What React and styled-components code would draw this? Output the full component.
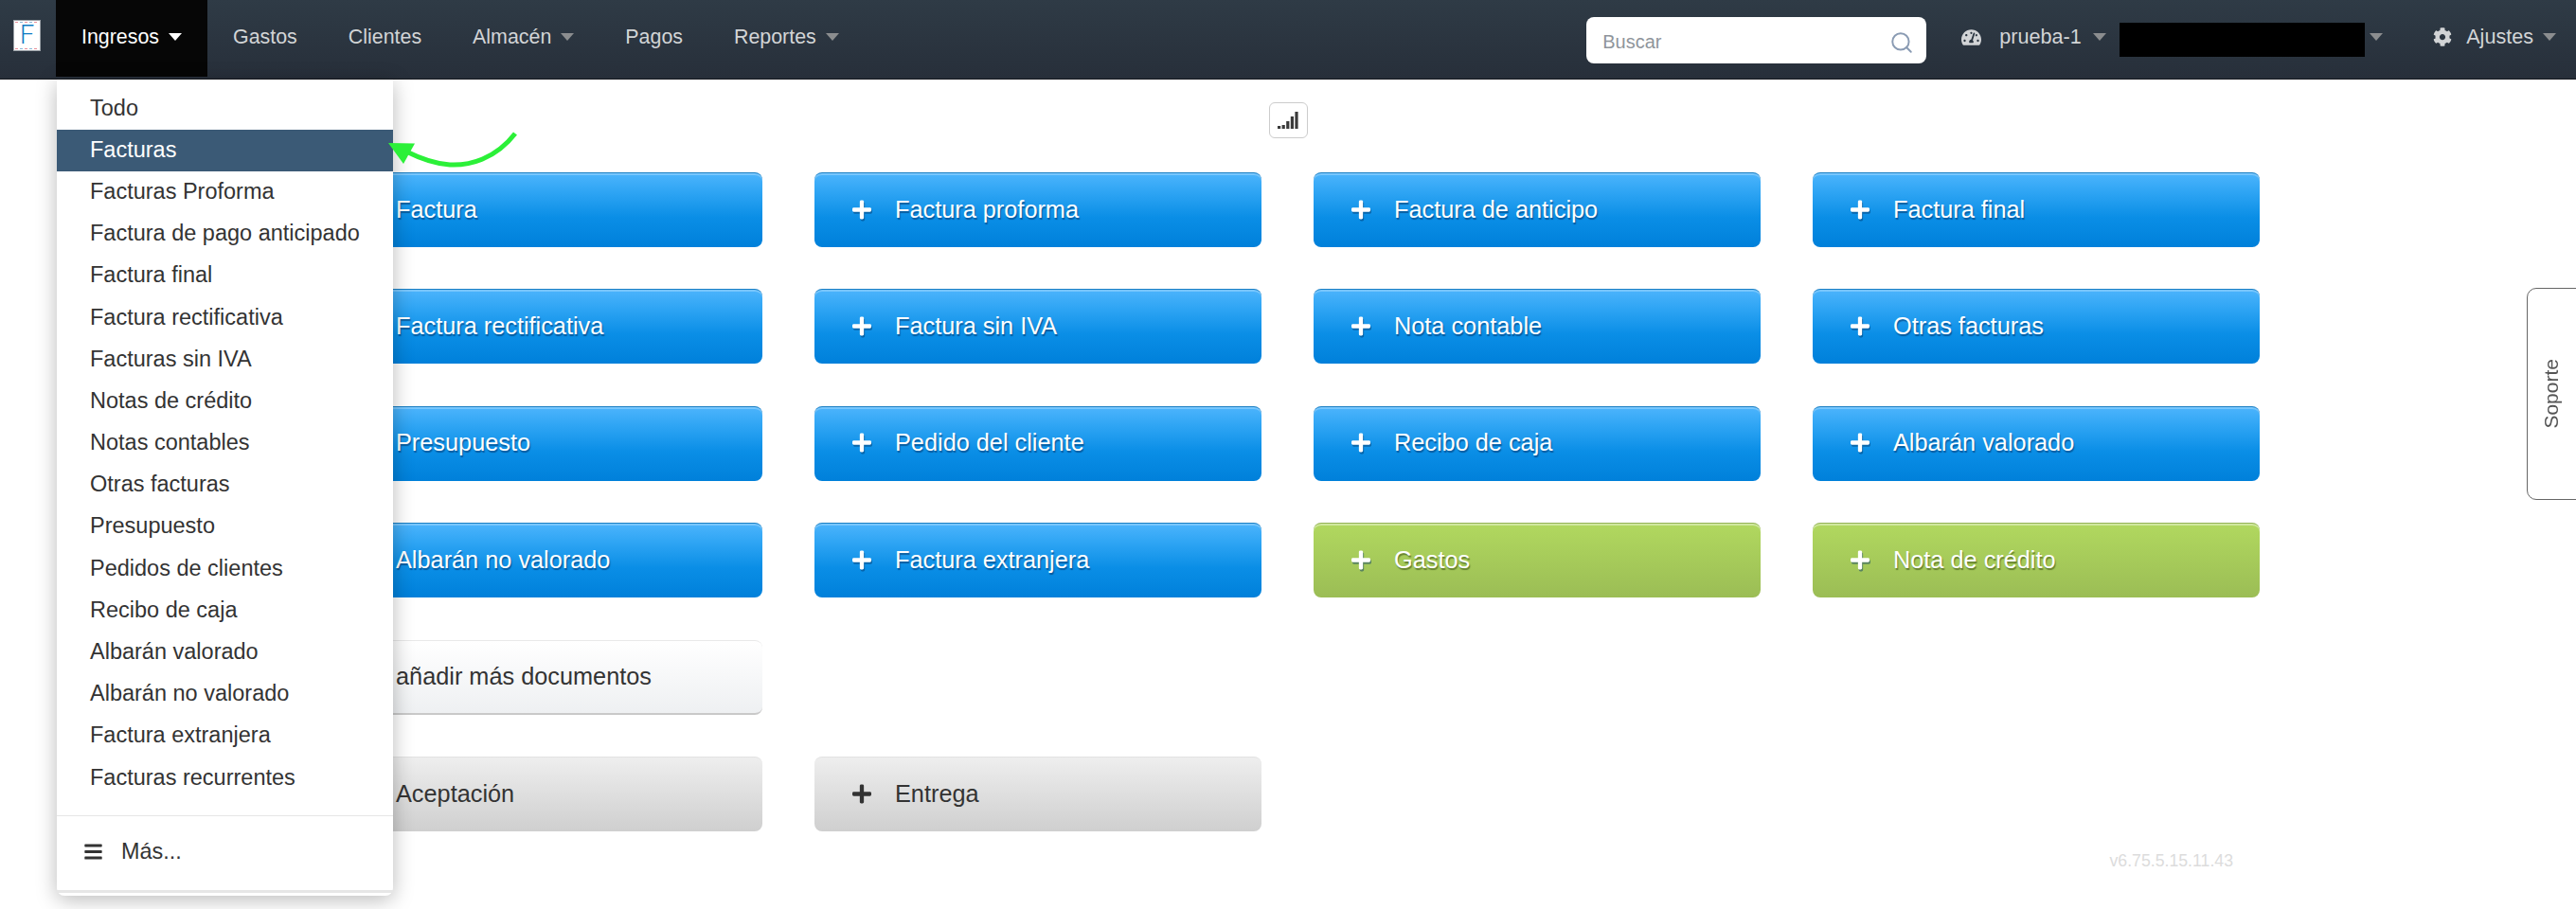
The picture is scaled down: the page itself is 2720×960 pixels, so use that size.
import React from "react";
import styled, { createGlobalStyle, css } from "styled-components";
import { FaPlus, FaBars, FaCog, FaTachometerAlt } from "react-icons/fa";
import { Search } from "lucide-react";

const GlobalStyle = createGlobalStyle`
  html, body {
    margin: 0;
    background: #fff;
    font-family: "Liberation Sans", Arial, sans-serif;
  }
  body {
    height: 960px;
    overflow: hidden;
  }
`;

const Page = styled.div`
  position: relative;
  width: 2720px;
  height: 960px;
  overflow: hidden;
`;

const NavBar = styled.header`
  display: flex;
  align-items: flex-start;
  height: 83px;
  background: linear-gradient(#2f3b46, #272f3a);
  border-bottom: 1px solid #14181d;
`;

const Logo = styled.div`
  display: flex;
  align-items: center;
  justify-content: center;
  box-sizing: border-box;
  width: 29px;
  height: 33px;
  margin: 21px 16px 0 14px;
  background:
    repeating-linear-gradient(90deg, #e8909a 0 3px, #fff 3px 5px, #8ab8d8 5px 8px, #fff 8px 10px) top 1px left 1px / 25px 1px no-repeat,
    repeating-linear-gradient(90deg, #e8909a 0 3px, #fff 3px 5px, #8ab8d8 5px 8px, #fff 8px 10px) bottom 1px left 1px / 25px 1px no-repeat,
    #fff;
  border: 1px solid #9aa0a6;
  color: #0f7cc4;
  font-family: Roboto, "Liberation Sans", sans-serif;
  font-weight: 300;
  font-size: 27px;
  line-height: 1;
`;

const NavItem = styled.div`
  display: flex;
  align-items: center;
  gap: 10px;
  height: 78px;
  padding: 0 27px 3px;
  font-size: 21.4px;
  color: #d2d4d6;
  ${(p) =>
    p.$active &&
    css`
      background: #060606;
      color: #fff;
    `}
`;

const Caret = styled.span`
  width: 0;
  height: 0;
  border-left: 7px solid transparent;
  border-right: 7px solid transparent;
  border-top: 8px solid ${(p) => (p.$light ? "#fff" : "#8b8d8f")};
`;

const SearchBox = styled.div`
  display: flex;
  align-items: center;
  justify-content: space-between;
  box-sizing: border-box;
  width: 359px;
  height: 49px;
  margin: 18px 0 0 auto;
  padding: 4px 13px 0 17px;
  background: #fff;
  border-radius: 8px;
  font-size: 20px;
  color: #8f959b;
`;

const RightGroup = styled.div`
  display: flex;
  align-items: center;
  height: 78px;
  margin-left: 37px;
  padding-right: 21px;
  font-size: 21.6px;
  color: #d2d4d6;
`;

const RightIcon = styled.span`
  display: flex;
  margin-right: ${(p) => p.$gap}px;
`;

const RightLabel = styled.span`
  margin-right: ${(p) => p.$gap}px;
`;

const Redacted = styled.div`
  width: 259px;
  height: 36px;
  margin: 6px 5px 0 14.5px;
  background: #000;
`;

const SpacedCaret = styled(Caret)`
  margin-right: ${(p) => p.$after || 0}px;
`;

const Menu = styled.nav`
  position: absolute;
  z-index: 5;
  top: 84px;
  left: 60px;
  box-sizing: border-box;
  width: 355px;
  height: 862px;
  padding-top: 9px;
  background: #fff;
  border-radius: 0 0 8px 8px;
  box-shadow: 0 4px 22px rgba(0, 0, 0, 0.28);
`;

const MenuItem = styled.div`
  display: flex;
  align-items: center;
  box-sizing: border-box;
  height: 44.2px;
  padding: 0 0 2px 35px;
  font-size: 23.5px;
  color: #333;
  ${(p) =>
    p.$active &&
    css`
      background: #3b5a76;
      color: #fff;
    `}
`;

const MenuDivider = styled.div`
  height: ${(p) => p.$thick || 1}px;
  margin-top: ${(p) => p.$top}px;
  background: #e6e6e6;
`;

const MoreItem = styled.div`
  display: flex;
  align-items: center;
  gap: 19px;
  box-sizing: border-box;
  height: 78px;
  padding: 0 0 3px 28px;
  font-size: 23.4px;
  color: #333;
`;

const Arrow = styled.svg`
  position: absolute;
  z-index: 6;
  top: 130px;
  left: 401px;
`;

const Main = styled.main`
  display: flex;
  flex-direction: column;
  align-items: center;
  padding-top: 24px;
`;

const SignalButton = styled.div`
  display: flex;
  align-items: center;
  justify-content: center;
  box-sizing: border-box;
  width: 41px;
  height: 38px;
  margin-bottom: 36px;
  background: #fff;
  border: 1px solid #ccc;
  border-radius: 6px;
`;

const Board = styled.div`
  align-self: flex-start;
  width: 2053px;
  margin-left: 333px;
`;

const ButtonList = styled.div`
  display: flex;
  flex-direction: column;
  gap: 44.4px;
`;

const ButtonRow = styled.div`
  display: flex;
  gap: 55px;
`;

const variants = {
  blue: css`
    padding-bottom: 2px;
    background: linear-gradient(#4cb4fc 0%, #2fa5f4 25%, #0a8ee6 60%, #0080da 100%);
    border-top: 1px solid #1a7fc4;
    box-shadow: inset 0 2px 0 rgba(255, 255, 255, 0.25);
    color: #fff;
    text-shadow: 1px 2px 1px rgba(0, 50, 100, 0.55);
  `,
  green: css`
    padding-bottom: 2px;
    background: linear-gradient(#b1d85f, #9bbd55);
    border-top: 1px solid #93b356;
    box-shadow: inset 0 2px 0 rgba(255, 255, 255, 0.4);
    color: #fff;
    text-shadow: 1px 2px 1px rgba(60, 80, 20, 0.6);
  `,
  white: css`
    background: linear-gradient(#fff, #eef0f2);
    border-top: 1px solid #e9e9e9;
    border-bottom: 2px solid #c9c9c9;
    color: #333;
  `,
  gray: css`
    background: linear-gradient(#eeeeee, #cfcfcf);
    border-top: 1px solid #e2e2e2;
    color: #333;
  `,
};

const DocButton = styled.div`
  display: flex;
  align-items: center;
  gap: 25px;
  box-sizing: border-box;
  width: 472px;
  height: 79px;
  padding-left: 40px;
  border-radius: 8px;
  font-size: 25.3px;
  ${(p) => variants[p.$variant]}
  svg {
    flex: none;
    width: 20px;
    ${(p) =>
      (p.$variant === "blue" || p.$variant === "green") &&
      css`
        filter: drop-shadow(1px 2px 0 rgba(0, 50, 100, 0.45));
      `}
  }
`;

const Version = styled.div`
  margin-top: 21px;
  padding-right: 28px;
  text-align: right;
  font-size: 17.7px;
  color: #dcdcdc;
`;

const SupportTab = styled.div`
  position: absolute;
  top: 304px;
  left: 2668px;
  display: flex;
  align-items: center;
  justify-content: center;
  box-sizing: border-box;
  width: 70px;
  height: 224px;
  padding-right: 18px;
  background: #fff;
  border: 1px solid #666;
  border-radius: 10px;
  font-size: 21px;
  color: #555;
`;

const SupportLabel = styled.span`
  writing-mode: vertical-rl;
  transform: rotate(180deg);
`;

const menuItems = [
  "Todo",
  "Facturas",
  "Facturas Proforma",
  "Factura de pago anticipado",
  "Factura final",
  "Factura rectificativa",
  "Facturas sin IVA",
  "Notas de crédito",
  "Notas contables",
  "Otras facturas",
  "Presupuesto",
  "Pedidos de clientes",
  "Recibo de caja",
  "Albarán valorado",
  "Albarán no valorado",
  "Factura extranjera",
  "Facturas recurrentes",
];

const rows = [
  [["Factura"], ["Factura proforma"], ["Factura de anticipo"], ["Factura final"]],
  [["Factura rectificativa"], ["Factura sin IVA"], ["Nota contable"], ["Otras facturas"]],
  [["Presupuesto"], ["Pedido del cliente"], ["Recibo de caja"], ["Albarán valorado"]],
  [["Albarán no valorado"], ["Factura extranjera"], ["Gastos", "green"], ["Nota de crédito", "green"]],
  [["añadir más documentos", "white"]],
  [["Aceptación", "gray"], ["Entrega", "gray"]],
];

const signalBars = [3, 4, 8, 13, 18];

function SignalIcon() {
  return (
    <svg width="23" height="18" viewBox="0 0 23 18" fill="#3a3a3a">
      {signalBars.map((h, i) => (
        <rect key={i} x={i * 4.6} y={18 - h} width="3.2" height={h} />
      ))}
    </svg>
  );
}

export default function App() {
  return (
    <Page>
      <GlobalStyle />
      <NavBar>
        <Logo>F</Logo>
        <NavItem $active>
          Ingresos <Caret $light />
        </NavItem>
        <NavItem>Gastos</NavItem>
        <NavItem>Clientes</NavItem>
        <NavItem>
          Almacén <Caret />
        </NavItem>
        <NavItem>Pagos</NavItem>
        <NavItem>
          Reportes <Caret />
        </NavItem>
        <SearchBox>
          Buscar
          <Search size={26} color="#8a9bb3" strokeWidth={1.8} />
        </SearchBox>
        <RightGroup>
          <RightIcon $gap={19}>
            <FaTachometerAlt size={21} />
          </RightIcon>
          <RightLabel $gap={12}>prueba-1</RightLabel>
          <Caret />
          <Redacted />
          <SpacedCaret $after={53} />
          <RightIcon $gap={15}>
            <FaCog size={20} />
          </RightIcon>
          <RightLabel $gap={10}>Ajustes</RightLabel>
          <Caret />
        </RightGroup>
      </NavBar>

      <Menu>
        {menuItems.map((item) => (
          <MenuItem key={item} $active={item === "Facturas"}>
            {item}
          </MenuItem>
        ))}
        <MenuDivider $top={17} />
        <MoreItem>
          <FaBars size={21} />
          Más...
        </MoreItem>
        <MenuDivider $top={0} $thick={3} />
      </Menu>

      <Arrow width="160" height="60" viewBox="0 0 160 60">
        <path d="M143 11 C122 38 95 45 74 44 C58 43 44 38 28 30" fill="none" stroke="#2bf038" strokeWidth="5" />
        <polygon points="9,21 37,21.5 25,43" fill="#2bf038" />
      </Arrow>

      <Main>
        <SignalButton>
          <SignalIcon />
        </SignalButton>
        <Board>
          <ButtonList>
            {rows.map((row, i) => (
              <ButtonRow key={i}>
                {row.map(([label, variant = "blue"]) => (
                  <DocButton key={label} $variant={variant}>
                    <FaPlus size={23} />
                    {label}
                  </DocButton>
                ))}
              </ButtonRow>
            ))}
          </ButtonList>
          <Version>v6.75.5.15.11.43</Version>
        </Board>
      </Main>

      <SupportTab>
        <SupportLabel>Soporte</SupportLabel>
      </SupportTab>
    </Page>
  );
}
